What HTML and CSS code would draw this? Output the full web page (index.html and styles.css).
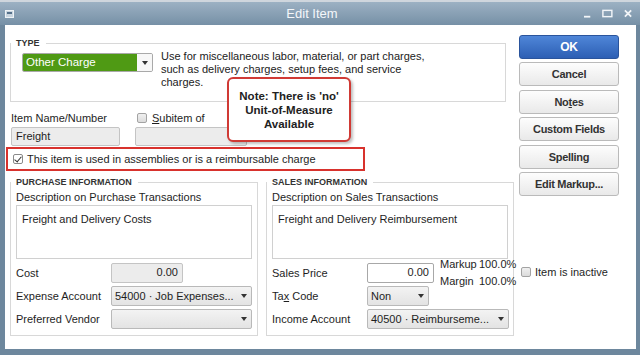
FILE: index.html
```html
<!doctype html>
<html lang="en">
<head>
	<meta charset="utf-8">
	<title>Edit Item</title>
	<link rel="stylesheet" href="styles.css">
</head>
<body>
	<div class="window">
		<div class="top-strip"></div>
		<!--Заголовок окна-->
		<div class="titlebar">
			<div class="title-left">
				<svg class="sys-icon" width="9" height="8" viewBox="0 0 9 8">
					<rect x="0.5" y="0.5" width="8" height="7" fill="#c9d5df" stroke="#eef2f5"/>
					<rect x="2" y="2" width="5" height="2" fill="#55708a"/>
				</svg>
			</div>
			<div class="title">Edit Item</div>
			<div class="win-controls">
				<svg width="8" height="10" viewBox="0 0 8 10"><rect x="0" y="7" width="7" height="2" fill="#f2f5f8"/></svg>
				<svg width="12" height="9" viewBox="0 0 12 9"><rect x="1" y="1" width="10" height="7" fill="none" stroke="#f2f5f8" stroke-width="1.6"/></svg>
				<svg width="9" height="9" viewBox="0 0 9 9"><path d="M1 1 L8 8 M8 1 L1 8" stroke="#f2f5f8" stroke-width="2"/></svg>
			</div>
		</div>

		<div class="client">
			<div class="main">
				<!--Тип элемента-->
				<div class="group type-group">
					<div class="group-title">TYPE</div>
					<div class="type-row">
						<div class="combo combo-type">
							<span class="combo-value">Other Charge</span>
							<span class="combo-arrow"></span>
						</div>
						<p class="type-desc">Use for miscellaneous labor, material, or part charges,<br>
							such as delivery charges, setup fees, and service<br>
							charges.</p>
					</div>
				</div>

				<div class="name-row">
					<div class="field field-name">
						<div class="field-label">Item Name/Number</div>
						<div class="textbox textbox-gray name-box">Freight</div>
					</div>
					<div class="field field-sub">
						<div class="field-label check-label"><span class="checkbox"></span><span><u>S</u>ubitem of</span></div>
						<div class="textbox textbox-gray sub-box"></div>
					</div>
				</div>

				<div class="highlight">
					<span class="checkbox checked"></span>
					<span>This item is used in assemblies or is a reimbursable charge</span>
				</div>

				<div class="info-row">
					<!--Закупка-->
					<div class="group info-group">
						<div class="group-title">PURCHASE INFORMATION</div>
						<div class="desc-label">Description on Purchase Transactions</div>
						<div class="textarea">Freight and Delivery Costs</div>
						<div class="form-row first">
							<div class="row-label">Cost</div>
							<div class="textbox textbox-gray num-box cost-box">0.00</div>
						</div>
						<div class="form-row">
							<div class="row-label">Expense Account</div>
							<div class="combo wide-combo">
								<span class="combo-value">54000 · Job Expenses...</span>
								<span class="combo-arrow"></span>
							</div>
						</div>
						<div class="form-row">
							<div class="row-label">Preferred Vendor</div>
							<div class="combo wide-combo">
								<span class="combo-value"></span>
								<span class="combo-arrow"></span>
							</div>
						</div>
					</div>

					<!--Продажа-->
					<div class="group info-group">
						<div class="group-title">SALES INFORMATION</div>
						<div class="desc-label">Description on Sales Transactions</div>
						<div class="textarea">Freight and Delivery Reimbursement</div>
						<div class="form-row first">
							<div class="row-label">Sales Price</div>
							<div class="textbox num-box price-box">0.00</div>
							<div class="markup">
								<span>Markup</span><span>100.0%</span>
								<span>Margin</span><span>100.0%</span>
							</div>
						</div>
						<div class="form-row">
							<div class="row-label">Ta<u>x</u> Code</div>
							<div class="combo tax-combo">
								<span class="combo-value">Non</span>
								<span class="combo-arrow"></span>
							</div>
						</div>
						<div class="form-row">
							<div class="row-label">Income Account</div>
							<div class="combo income-combo">
								<span class="combo-value">40500 · Reimburseme...</span>
								<span class="combo-arrow"></span>
							</div>
						</div>
					</div>
				</div>

				<!--Выноска-->
				<div class="callout">Note: There is 'no'<br>Unit-of-Measure<br>Available</div>
			</div>

			<div class="buttons">
				<div class="btn btn-ok">OK</div>
				<div class="btn">Cancel</div>
				<div class="btn">No<u>t</u>es</div>
				<div class="btn">Custom Fields</div>
				<div class="btn">Spellin<u>g</u></div>
				<div class="btn">Edit Markup...</div>
				<div class="inactive"><span class="checkbox"></span><span>Item is inactive</span></div>
			</div>
		</div>
	</div>
</body>
</html>
```

FILE: styles.css
```css
body {
	margin: 0;
	font-family: "Liberation Sans", Arial, sans-serif;
	font-size: 11px;
	color: #1e1e1e;
}

/*рамка окна*/
.window {
	width: 640px;
	height: 355px;
	background-color: #6d879d;
	display: flex;
	flex-direction: column;
	overflow: hidden;
}

.top-strip {
	height: 2px;
	background-color: #cfd6dd;
}

.titlebar {
	height: 23px;
	background: linear-gradient(#9cb1c3, #7690a6);
	display: flex;
	align-items: center;
	color: #fff;
}

.title-left {
	width: 40px;
	padding-left: 5px;
	box-sizing: border-box;
	display: flex;
}

.title {
	flex: 1;
	text-align: center;
	font-size: 13px;
	color: #f4f7fa;
}

.win-controls {
	width: 56px;
	display: flex;
	align-items: center;
	gap: 11px;
	padding-right: 8px;
	box-sizing: border-box;
	justify-content: flex-end;
}

.client {
	flex: 1;
	margin: 0 4px 6px 5px;
	background-color: #fff;
	display: flex;
}

.main {
	width: 510px;
	padding-left: 5px;
	box-sizing: border-box;
	position: relative;
}

/*рамки групп*/
.group {
	--pad: 11px;
	border: 1px solid #d8d8d8;
	padding-left: var(--pad);
	box-sizing: border-box;
}

.group-title {
	width: fit-content;
	margin: -7px 0 0 calc(-1 * var(--pad));
	padding: 0 6px 0 5px;
	background-color: #fff;
	font-weight: bold;
	font-size: 9px;
	line-height: 12px;
	color: #333;
}

.type-group {
	margin-top: 18px;
	width: 496px;
	height: 59px;
}

.type-row {
	display: flex;
	align-items: flex-start;
	gap: 8px;
	margin-top: 4px;
}

.type-desc {
	margin: -3px 0 0;
	line-height: 13px;
	color: #222;
}

/*выпадающие списки*/
.combo {
	display: flex;
	align-items: center;
	height: 20px;
	border: 1px solid #b9b9b9;
	border-radius: 2px;
	background: linear-gradient(#f3f3f3, #e3e3e3);
	box-sizing: border-box;
	overflow: hidden;
	flex-shrink: 0;
}

.combo-value {
	flex: 1;
	padding-left: 3px;
	white-space: nowrap;
	overflow: hidden;
}

.combo-arrow {
	width: 15px;
	height: 100%;
	display: flex;
	align-items: center;
	justify-content: center;
	flex-shrink: 0;
}

.combo-arrow::before {
	content: "";
	border-left: 3px solid transparent;
	border-right: 3px solid transparent;
	border-top: 4px solid #333;
}

.combo-type {
	width: 131px;
	height: 19px;
	border-color: #a9a9a9;
}

.combo-type .combo-value {
	height: 100%;
	line-height: 17px;
	background-color: #4f9a14;
	color: #fff;
	font-size: 11.5px;
}

.combo-type .combo-arrow {
	background-color: #f7f7f7;
}

.name-row {
	display: flex;
	margin: 9px 0 0 1px;
}

.field-label {
	line-height: 14px;
	margin-bottom: 2px;
}

.field-name {
	width: 124px;
}

.check-label {
	display: flex;
	align-items: center;
	gap: 5px;
	padding-left: 2px;
}

.textbox {
	height: 19px;
	border: 1px solid #a8a8a8;
	border-radius: 2px;
	box-sizing: border-box;
	padding: 0 4px;
	line-height: 17px;
	background-color: #fff;
	flex-shrink: 0;
}

.textbox-gray {
	background-color: #ececec;
	border-color: #c4c4c4;
}

.name-box {
	width: 109px;
}

.sub-box {
	width: 112px;
}

.num-box {
	text-align: right;
	height: 20px;
}

/*флажки*/
.checkbox {
	display: inline-block;
	width: 10px;
	height: 10px;
	border: 1px solid #a3a3a3;
	border-radius: 2px;
	background: linear-gradient(#f0f0f0, #dcdcdc);
	box-sizing: border-box;
	flex-shrink: 0;
	position: relative;
}

.checked {
	background: #fff;
	border-color: #8a8a8a;
}

.checked::after {
	content: "";
	position: absolute;
	left: 2px;
	top: 0px;
	width: 3px;
	height: 6px;
	border-right: 1.5px solid #333;
	border-bottom: 1.5px solid #333;
	transform: rotate(40deg);
}

.highlight {
	margin: 1px 0 0 -4px;
	width: 359px;
	height: 24px;
	border: 2px solid #d8322d;
	box-sizing: border-box;
	display: flex;
	align-items: center;
	gap: 4px;
	padding-left: 5px;
}

.info-row {
	display: flex;
	gap: 8px;
	margin-top: 11px;
}

.info-group {
	--pad: 5px;
	width: 248px;
	height: 154px;
	padding-right: 5px;
}

.desc-label {
	margin-top: 2px;
	line-height: 14px;
}

.textarea {
	margin-top: 1px;
	height: 54px;
	border: 1px solid #d0d0d0;
	box-sizing: border-box;
	padding: 6px 5px;
	line-height: 14px;
}

.form-row {
	display: flex;
	align-items: center;
	height: 20px;
	margin-top: 3px;
}

.form-row.first {
	margin-top: 4px;
}

.row-label {
	width: 95px;
	flex-shrink: 0;
}

.cost-box {
	width: 72px;
}

.wide-combo {
	width: 141px;
}

.price-box {
	width: 67px;
}

.markup {
	display: grid;
	grid-template-columns: 39px auto;
	column-gap: 0;
	line-height: 17px;
	margin-left: 6px;
	white-space: nowrap;
	flex-shrink: 0;
}

.tax-combo {
	width: 62px;
}

.income-combo {
	width: 142px;
}

/*выноска*/
.callout {
	position: absolute;
	left: 222px;
	top: 52px;
	width: 124px;
	height: 65px;
	border: 2px solid #d03a35;
	border-radius: 6px;
	background-color: #fff;
	box-shadow: 2px 2px 3px rgba(0, 0, 0, .25);
	box-sizing: border-box;
	display: flex;
	align-items: center;
	justify-content: center;
	text-align: center;
	font-weight: bold;
	font-size: 11.5px;
	line-height: 14px;
	color: #222;
}

/*кнопки*/
.buttons {
	width: 100px;
	margin-left: 4px;
	padding-top: 10px;
	display: flex;
	flex-direction: column;
}

.btn {
	height: 24px;
	margin-bottom: 3.4px;
	border: 1px solid #bababa;
	border-radius: 3px;
	background: linear-gradient(#fdfdfd, #e9e9e9);
	box-sizing: border-box;
	display: flex;
	align-items: center;
	justify-content: center;
	font-weight: bold;
	font-size: 11px;
	letter-spacing: -0.3px;
	color: #333;
}

.btn-ok {
	background: linear-gradient(#4f86d8, #2d5fb4);
	border-color: #2a549c;
	color: #fff;
	font-size: 12px;
}

.inactive {
	margin: 66px 0 0 2px;
	display: flex;
	align-items: center;
	gap: 4px;
	line-height: 14px;
}
```
